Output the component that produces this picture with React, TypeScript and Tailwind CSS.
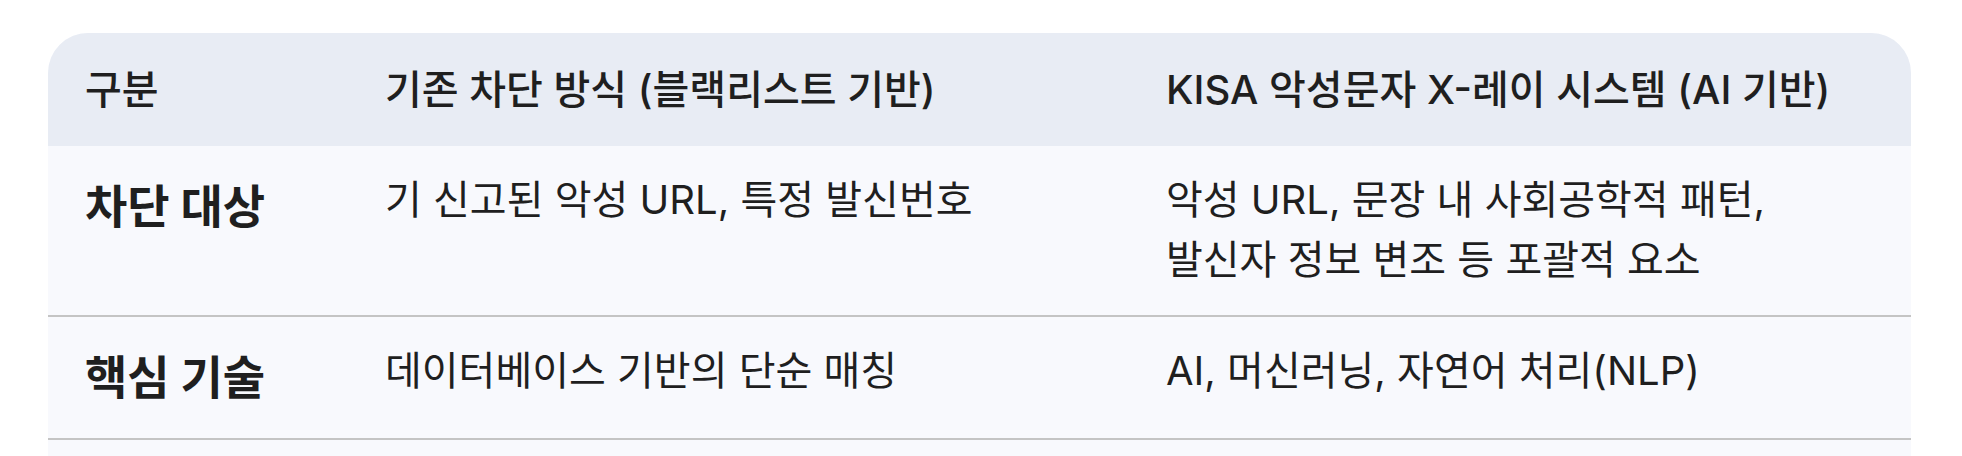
import React from 'react';

const rows = [
    {
        label: '차단 대상',
        legacy: ['기 신고된 악성 URL, 특정 발신번호'],
        xray: ['악성 URL, 문장 내 사회공학적 패턴,', '발신자 정보 변조 등 포괄적 요소'],
    },
    {
        label: '핵심 기술',
        legacy: ['데이터베이스 기반의 단순 매칭'],
        xray: ['AI, 머신러닝, 자연어 처리(NLP)'],
    },
];

const App: React.FC = () => {
    return (
        <div className="h-[456px] overflow-hidden bg-white pt-[33px] pl-[48px] font-['Inter','Noto_Sans_CJK_KR',sans-serif] text-[#1f1f1f]">
            <div className="w-[1863px] overflow-hidden rounded-t-[40px] bg-[#f8f9fd]">
                {/* header */}
                <div className="grid grid-cols-[301px_781px_781px] bg-[#e8ecf4] text-[40px] font-medium leading-[65px]">
                    <div className="px-[37px] py-[24px]">구분</div>
                    <div className="px-[36px] py-[24px]">기존 차단 방식 (블랙리스트 기반)</div>
                    <div className="px-[36px] py-[24px] whitespace-nowrap">KISA 악성문자 X-레이 시스템 (AI 기반)</div>
                </div>

                {rows.map(row => (
                    <div key={row.label} className="grid grid-cols-[301px_781px_781px] items-start border-b-2 border-[#c4c4c4]">
                        <div className="px-[37px] pt-[24px] pb-[25px] text-[46px] font-bold leading-[72px]">{row.label}</div>
                        <div className="px-[36px] pt-[24px] pb-[25px] text-[40px] leading-[60px]">
                            {row.legacy.map(line => (
                                <div key={line}>{line}</div>
                            ))}
                        </div>
                        <div className="px-[36px] pt-[24px] pb-[25px] text-[40px] leading-[60px] whitespace-nowrap">
                            {row.xray.map(line => (
                                <div key={line}>{line}</div>
                            ))}
                        </div>
                    </div>
                ))}

                <div className="h-[16px]" />
            </div>
        </div>
    );
};

export default App;
